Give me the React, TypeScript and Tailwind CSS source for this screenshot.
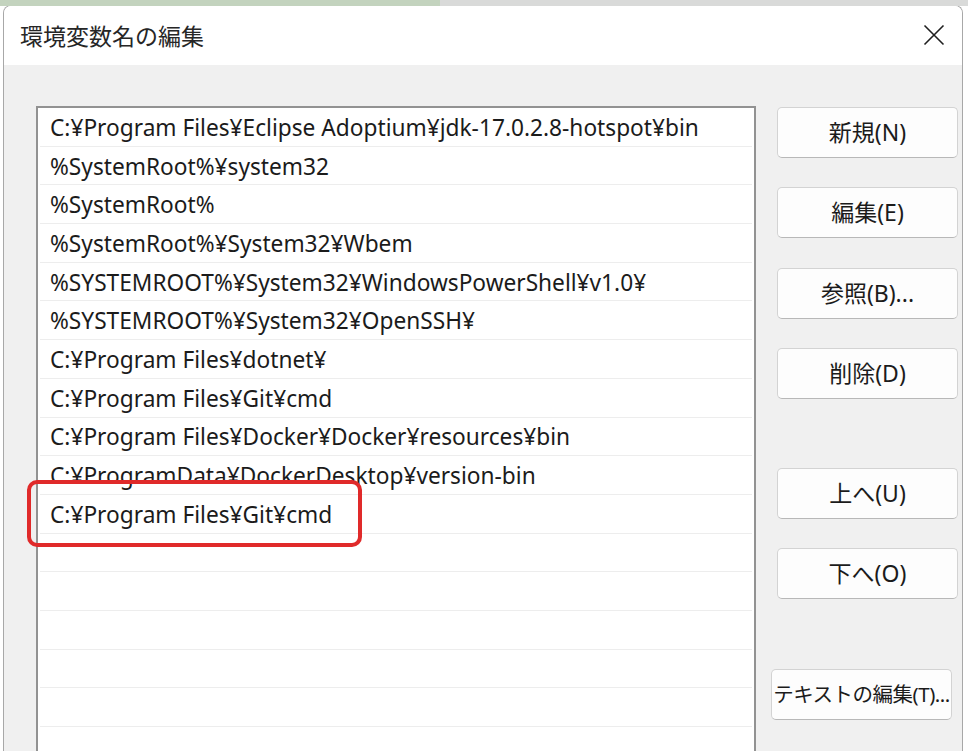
import React from "react";

const rows = [
  "C:¥Program Files¥Eclipse Adoptium¥jdk-17.0.2.8-hotspot¥bin",
  "%SystemRoot%¥system32",
  "%SystemRoot%",
  "%SystemRoot%¥System32¥Wbem",
  "%SYSTEMROOT%¥System32¥WindowsPowerShell¥v1.0¥",
  "%SYSTEMROOT%¥System32¥OpenSSH¥",
  "C:¥Program Files¥dotnet¥",
  "C:¥Program Files¥Git¥cmd",
  "C:¥Program Files¥Docker¥Docker¥resources¥bin",
  "C:¥ProgramData¥DockerDesktop¥version-bin",
  "C:¥Program Files¥Git¥cmd",
  "",
  "",
  "",
  "",
  "",
  "",
];

const font = { fontFamily: '"Noto Sans", "Noto Sans CJK JP", sans-serif' };

function Btn({ label, className = "" }: { label: string; className?: string }) {
  return (
    <div
      className={
        "h-[51px] w-[181px] rounded-[5px] border border-[#d3d3d3] border-b-[#b8b8b8] bg-[#fdfdfd] flex items-center justify-center text-[#1b1b1b] whitespace-nowrap " +
        className
      }
    >
      {label}
    </div>
  );
}

export default function App() {
  return (
    <div className="relative w-[968px] h-[756px] overflow-hidden bg-white" style={font}>
      {/* background window strip */}
      <div className="flex h-[6px]">
        <div className="w-[440px] bg-[#c3d3be]" />
        <div className="flex-1 bg-[#d9dad9]" />
      </div>
      {/* dialog */}
      <div className="ml-[3px] w-[960px] h-[746px] -mt-[1px] flex flex-col rounded-t-[8px] border-x border-t border-[#a8a8a8] overflow-hidden">
        <div className="h-[59px] shrink-0 bg-white flex items-center justify-between pl-[16px] pr-[17px]">
          <span className="text-[23px] text-[#262626] leading-none" style={{ fontFamily: '"Noto Sans CJK JP", sans-serif' }}>
            環境変数名の編集
          </span>
          <svg width="22" height="22" viewBox="0 0 22 22" className="mt-[-2px]">
            <path d="M1.5 1.5 L20.5 20.5 M20.5 1.5 L1.5 20.5" stroke="#1f1f1f" strokeWidth="1.6" fill="none" />
          </svg>
        </div>
        <div className="flex-1 bg-[#f0f0f0] flex pt-[41px]">
          <div className="ml-[32px] w-[720px] bg-white border-x-2 border-t-2 border-[#929292] flex flex-col overflow-hidden">
            {rows.map((r, i) => (
              <div
                key={i}
                className="h-[38.7px] shrink-0 mx-[2px] border-b-[1.5px] border-[#ededed] flex items-center pl-[10px] pt-[2px] text-[22.7px] text-[#1b1b1b] whitespace-nowrap"
              >
                {r}
              </div>
            ))}
          </div>
          <div className="ml-[21px] flex flex-col pt-[1px]">
            <Btn label="新規(N)" className="text-[23px]" />
            <Btn label="編集(E)" className="mt-[29px] text-[23px]" />
            <Btn label="参照(B)..." className="mt-[30px] text-[23px]" />
            <Btn label="削除(D)" className="mt-[29px] text-[23px]" />
            <Btn label="上へ(U)" className="mt-[69px] text-[23px]" />
            <Btn label="下へ(O)" className="mt-[29px] text-[23px]" />
            <Btn label="テキストの編集(T)..." className="mt-[70px] -ml-[6px] text-[20.5px] tracking-[-0.5px]" />
          </div>
        </div>
      </div>
      {/* red highlight */}
      <div className="absolute left-[27px] top-[480px] w-[335px] h-[67px] rounded-[10px] border-[4px] border-[#e02a2a]" />
    </div>
  );
}
